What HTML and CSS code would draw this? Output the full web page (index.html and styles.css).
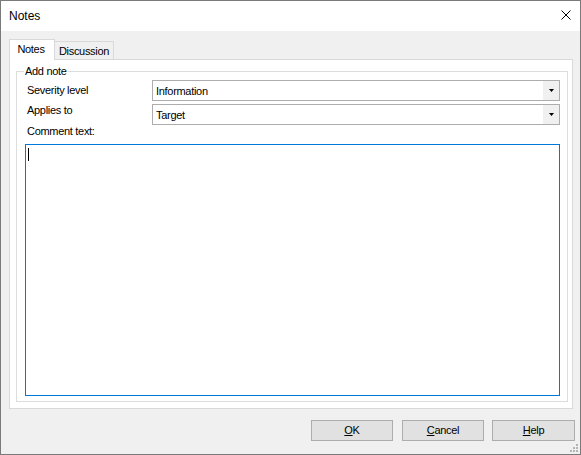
FILE: index.html
```html
<!DOCTYPE html>
<html>
<head>
<meta charset="utf-8">
<title>Notes</title>
<link rel="stylesheet" href="styles.css">
</head>
<body>
<div class="window">
  <div class="titlebar">
    <span class="title">Notes</span>
    <svg class="close" width="10" height="10" viewBox="0 0 10 10"><path d="M0.5 0.5 L9.5 9.5 M9.5 0.5 L0.5 9.5" stroke="#000" stroke-width="1" fill="none"/></svg>
  </div>
  <div class="client">
    <div class="tabs">
      <div class="tab active">Notes</div>
      <div class="tab">Discussion</div>
    </div>
    <div class="panel">
      <fieldset class="group">
        <legend>Add note</legend>
        <div class="row">
          <span class="label label-sev">Severity level</span>
          <div class="combo"><span class="combo-text">Information</span><span class="combo-btn"><svg width="5" height="3" viewBox="0 0 5 3"><path d="M0 0H5L2.5 3Z" fill="#000"/></svg></span></div>
        </div>
        <div class="row row2">
          <span class="label label-app">Applies to</span>
          <div class="combo"><span class="combo-text">Target</span><span class="combo-btn"><svg width="5" height="3" viewBox="0 0 5 3"><path d="M0 0H5L2.5 3Z" fill="#000"/></svg></span></div>
        </div>
        <span class="label label-comment">Comment text:</span>
        <div class="textbox"><span class="caret"></span></div>
      </fieldset>
    </div>
    <div class="buttons">
      <button class="btn"><u>O</u>K</button>
      <button class="btn btn-cancel"><u>C</u>ancel</button>
      <button class="btn btn-help"><u>H</u>elp</button>
    </div>
  </div>
  <svg class="grip" width="8" height="8" viewBox="0 0 8 8">
    <rect x="6" y="0" width="2" height="2" fill="#b4b4b4"/>
    <rect x="3" y="3" width="2" height="2" fill="#b4b4b4"/>
    <rect x="6" y="3" width="2" height="2" fill="#b4b4b4"/>
    <rect x="0" y="6" width="2" height="2" fill="#b4b4b4"/>
    <rect x="3" y="6" width="2" height="2" fill="#b4b4b4"/>
    <rect x="6" y="6" width="2" height="2" fill="#b4b4b4"/>
  </svg>
</div>
</body>
</html>
```
FILE: styles.css
```css
html, body {
  margin: 0;
  padding: 0;
  background: #fff;
}
.window {
  position: relative;
  width: 581px;
  height: 455px;
  box-sizing: border-box;
  border: 1px solid #7a7a7a;
  background: #f0f0f0;
  display: flex;
  flex-direction: column;
  font-family: "Liberation Sans", Arial, sans-serif;
  font-size: 11px;
  letter-spacing: -0.3px;
  color: #000;
}
.titlebar {
  height: 30px;
  flex: none;
  background: #fff;
  display: flex;
  align-items: center;
  justify-content: space-between;
  padding: 0 9px 0 8px;
}
.title {
  font-size: 12px;
  line-height: 14px;
  letter-spacing: 0;
}
.close {
  display: block;
  align-self: flex-start;
  margin-top: 9px;
}
.client {
  flex: 1;
  display: flex;
  flex-direction: column;
  padding: 8px 7px 0 8px;
}
.tabs {
  display: flex;
  align-items: flex-end;
  height: 21px;
  margin-bottom: -1px;
  position: relative;
  z-index: 1;
}
.tab {
  box-sizing: border-box;
  height: 18px;
  width: 59px;
  margin-bottom: 1px;
  border-top: 1px solid #d9d9d9;
  border-right: 1px solid #d9d9d9;
  background: #f0f0f0;
  text-align: center;
  line-height: 13px;
  padding-top: 3px;
}
.tab.active {
  height: 21px;
  width: 46px;
  margin-bottom: 0;
  border-left: 1px solid #d9d9d9;
  background: #fff;
  padding-top: 3px;
  padding-right: 2px;
}
.panel {
  height: 350px;
  box-sizing: border-box;
  border: 1px solid #d9d9d9;
  background: #fff;
  padding: 5px 4px 6px 6px;
  display: flex;
}
.group {
  flex: 1;
  min-width: 0;
  margin: 0;
  border: 1px solid #dcdcdc;
  padding: 2px 7px 5px 8px;
  display: flex;
  flex-direction: column;
}
.group legend {
  padding: 0 1px;
  margin-left: -1px;
  line-height: 13px;
}
.row {
  display: flex;
  align-items: flex-start;
  height: 21px;
}
.row2 {
  margin-top: 3px;
}
.label {
  line-height: 13px;
  padding-left: 2px;
}
.row .label {
  width: 125px;
  flex: none;
}
.label-sev {
  margin-top: 4px;
}
.label-app {
  margin-top: 0;
}
.label-comment {
  display: block;
  height: 13px;
}
.combo {
  flex: 1;
  height: 21px;
  box-sizing: border-box;
  border: 1px solid #adadad;
  background: #fff;
  display: flex;
}
.combo-text {
  flex: 1;
  line-height: 13px;
  padding: 4px 0 0 3px;
}
.combo-btn {
  width: 16px;
  background: #f0f0f0;
  display: flex;
  align-items: center;
  justify-content: center;
  padding-left: 1px;
  box-sizing: border-box;
}
.combo-btn svg {
  display: block;
}
.textbox {
  flex: 1;
  margin-top: 6px;
  border: 1px solid #0078d7;
  background: #fff;
  padding: 3px 0 0 2px;
}
.caret {
  display: block;
  width: 1px;
  height: 13px;
  background: #000;
}
.buttons {
  display: flex;
  justify-content: flex-end;
  margin-top: 11px;
  margin-right: -2px;
}
.btn {
  width: 82px;
  height: 21px;
  box-sizing: border-box;
  border: 1px solid #adadad;
  background: #e1e1e1;
  font-family: "Liberation Sans", Arial, sans-serif;
  font-size: 11px;
  letter-spacing: -0.3px;
  color: #000;
  padding: 0;
  margin: 0;
  line-height: 13px;
}
.btn-cancel {
  margin-left: 9px;
}
.btn-help {
  width: 83px;
  margin-left: 8px;
}
.grip {
  position: absolute;
  right: 2px;
  bottom: 2px;
  display: block;
}
```
